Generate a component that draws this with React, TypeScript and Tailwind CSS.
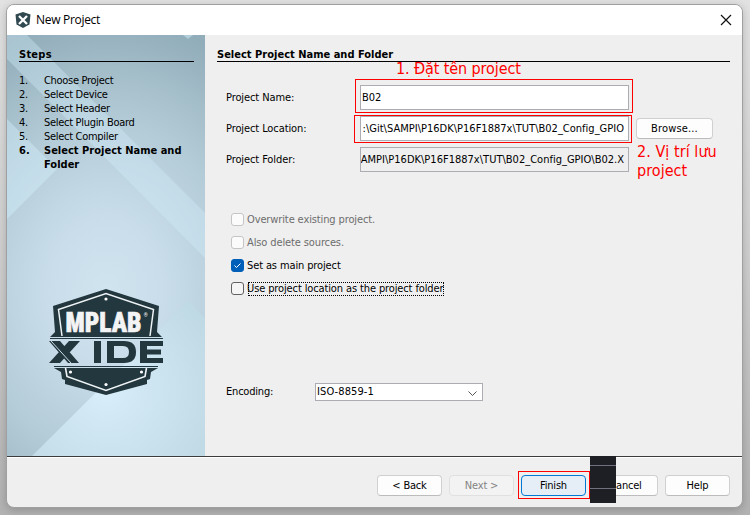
import React from 'react';

const steps = ['Choose Project', 'Select Device', 'Select Header', 'Select Plugin Board', 'Select Compiler', 'Select Project Name and Folder'];

function Backdrop() {
  return (
    <svg className="absolute inset-0" width="198" height="421" viewBox="7 35 198 421">
      <defs>
        <radialGradient id="glow" gradientUnits="userSpaceOnUse" cx="106" cy="290" r="275" gradientTransform="translate(106 290) scale(.8 1) translate(-106 -290)">
          <stop offset="0" stopColor="#d0e4f0" />
          <stop offset=".25" stopColor="#c9deea" />
          <stop offset=".6" stopColor="#b4ccd8" />
          <stop offset="1" stopColor="#91adb9" />
        </radialGradient>
        <radialGradient id="low" gradientUnits="userSpaceOnUse" cx="106" cy="390" r="150">
          <stop offset="0" stopColor="#d8eefa" />
          <stop offset="1" stopColor="#b8d3df" />
        </radialGradient>
      </defs>
      <rect x="7" y="35" width="198" height="421" fill="url(#glow)" />
      <path d="M27 35L205 213V258L7 59V35Z" fill="#d2edfa" opacity=".38" />
      <path d="M7 119L57 169L7 219Z" fill="#d2edfa" opacity=".45" />
      <path d="M183 35H193L188 39Z" fill="#d2edfa" opacity=".5" />
      <path d="M188 301L205 318V456H32Z" fill="url(#low)" />
    </svg>
  );
}

function Logo() {
  return (
    <svg className="absolute left-[42px] top-[253px]" width="116" height="108" viewBox="49 288 116 108">
      <path d="M106 289L159 306L157 332L162 337H50L55 332L53 306Z" fill="#23373f" />
      <path d="M62 336L58.500 309.500L106 293.500L153.500 309.500L150 336" fill="none" stroke="#eef3f5" strokeWidth="1.500" />
      <path d="M50 338.500H163" stroke="#23373f" strokeWidth="1" />
      <circle cx="106" cy="299" r="1.600" fill="#fff" />
      <text x="65.500" y="332" textLength="76" lengthAdjust="spacingAndGlyphs" fontFamily="Roboto, sans-serif" fontWeight="900" fontSize="27" fill="#f4f4f4" stroke="#f4f4f4" strokeWidth=".6" letterSpacing="0">MPLAB</text>
      <text x="143.800" y="317" fontFamily="Roboto, sans-serif" fontSize="5" fill="#fff" letterSpacing="0">®</text>
      <path d="M49 341H60L79 363H68ZM69 341H80L60 363H49Z" fill="#23373f" />
      <path d="M51 341L71 363" stroke="#c9dfe9" strokeWidth="1" />
      <path d="M94 341H101V363H94ZM107 341H124Q136 341 136 352Q136 363 124 363H107ZM114 346V358H123Q129 358 129 352Q129 346 123 346ZM140 341H163V346H147V349.500H161V354.500H147V358H163V363H140Z" fill="#23373f" fillRule="evenodd" />
      <path d="M54 366.500H158" stroke="#23373f" />
      <path d="M54 368H158L151 372L150 379L147 380V384L106 395L65 384V380L62 379L61 372Z" fill="#23373f" />
      <path d="M65.500 368L67 376.500L106 390.500L145 376.500L146.500 368" fill="none" stroke="#eef3f5" strokeWidth="1.600" />
      <circle cx="70.500" cy="372" r="1.600" fill="#fff" />
      <circle cx="141.500" cy="372" r="1.600" fill="#fff" />
      <circle cx="106" cy="384.500" r="1.600" fill="#fff" />
    </svg>
  );
}

function Field({ label, value, align = '', bg = 'bg-white' }: { label: string; value: string; align?: string; bg?: string }) {
  return (
    <div className="flex h-[25px] items-center">
      <label className="w-[134px] tracking-[-0.1px]">{label}</label>
      <div className={`flex h-[25px] w-[269px] items-center overflow-hidden border border-[#abadb3] pl-px pr-[4px] tracking-[0.01px] ${bg} ${align}`}>{value}</div>
    </div>
  );
}

function Check({ label, checked = false, disabled = false, focus = false }: { label: string; checked?: boolean; disabled?: boolean; focus?: boolean }) {
  return (
    <div className="flex h-[15px] items-center gap-[3px]">
      <span className={`flex size-[13px] items-center justify-center rounded-[3px] border ${checked ? 'border-[#005fb8] bg-[#005fb8]' : disabled ? 'border-[#c5c5c5] bg-[#fbfbfb]' : 'border-[#626262] bg-[#f5f5f5]'}`}>
        {checked && <svg width="9" height="9" viewBox="0 0 9 9"><path d="M1.500 4.500L3.500 6.500L7.500 2.500" fill="none" stroke="#fff" /></svg>}
      </span>
      <span className={`relative whitespace-nowrap tracking-[-0.12px] ${disabled ? 'text-[#6d6d6d]' : ''}`}>
        {label}
        {focus && <span className="absolute left-px top-0 h-[14px] w-[196px] border border-dotted border-black" />}
      </span>
    </div>
  );
}

function Btn({ children, kind = 'border-[#d0d0d0] border-b-[#bcbcbc] bg-[#fdfdfd]', w = 'w-[65px]' }: { children: React.ReactNode; kind?: string; w?: string }) {
  return <button className={`flex h-[21px] shrink-0 items-center justify-center rounded-[4px] border ${w} ${kind}`}>{children}</button>;
}

export default function App() {
  return (
    <div className="relative h-[515px] w-[750px] overflow-hidden bg-gradient-to-b from-[#e2e2e2] via-[#cfcfcf] to-[#b2b2b2] px-[6px] pt-[4px] font-['DejaVu_Sans_Condensed','DejaVu_Sans',sans-serif] text-[11px] leading-[14px] tracking-[-0.2px] text-black [font-stretch:condensed]">
      <div className="flex h-[504px] w-[737px] flex-col overflow-hidden rounded-[8px] border border-[#a0a0a0] bg-[#efefef] shadow-[0_2px_8px_rgba(0,0,0,0.2)]">
        <header className="flex h-[30px] shrink-0 items-center justify-between bg-white pl-[8px] pr-[10px]">
          <div className="flex items-center gap-[5px]">
            <svg width="16" height="16" viewBox="0 0 16 16">
              <path d="M8 0L15.500 2.500L14.500 12.500L8 16L1.500 12.500L.5 2.500Z" fill="#304850" />
              <path d="M4 4L12 12M12 4L4 12" stroke="#fff" strokeWidth="2.300" />
            </svg>
            <span className="font-['Open_Sans',sans-serif] text-[12px] tracking-[-0.3px] [font-stretch:normal]">New Project</span>
          </div>
          <svg width="12" height="12" viewBox="0 0 12 12"><path d="M1 1L11 11M11 1L1 11" stroke="#111" strokeWidth="1.200" /></svg>
        </header>
        <main className="flex h-[421px] shrink-0">
          <aside className="relative w-[198px] shrink-0 px-[12px] pt-[12px]">
            <Backdrop />
            <Logo />
            <div className="relative">
              <h2 className="h-[15px] w-[175px] border-b border-black pt-px font-bold tracking-[0.25px]">Steps</h2>
              <ol className="mt-[12px]">
                {steps.map((s, i) => (
                  <li key={s} className={`flex ${i === 5 ? 'font-bold tracking-[0.01px]' : 'tracking-[-0.3px]'}`}>
                    <span className="w-[25px] shrink-0">{i + 1}.</span><span className="w-[145px]">{s}</span>
                  </li>
                ))}
              </ol>
            </div>
          </aside>
          <section className="relative flex-1 pl-[12px] pt-[12px]">
            <h2 className="h-[15px] w-[513px] border-b border-black pt-px font-bold tracking-[0.01px]">Select Project Name and Folder</h2>
            <div className="ml-[9px] mt-[23px] flex flex-col gap-[6px]">
              <Field label="Project Name:" value="B02" />
              <div className="flex items-center gap-[7px]">
                <Field label="Project Location:" value=":\Git\SAMPI\P16DK\P16F1887x\TUT\B02_Config_GPIO" align="justify-end" />
                <Btn w="w-[77px] tracking-[0.15px]">Browse...</Btn>
              </div>
              <Field label="Project Folder:" value="AMPI\P16DK\P16F1887x\TUT\B02_Config_GPIO\B02.X" align="justify-end" bg="bg-[#efefef]" />
            </div>
            <div className="ml-[14px] mt-[40px] flex flex-col gap-[8px]">
              <Check label="Overwrite existing project." disabled />
              <Check label="Also delete sources." disabled />
              <Check label="Set as main project" checked />
              <Check label="Use project location as the project folder" focus />
            </div>
            <div className="ml-[9px] mt-[87px] flex h-[18px] items-center">
              <span className="w-[89px]">Encoding:</span>
              <div className="flex h-[18px] w-[168px] items-center justify-between border border-[#abadb3] bg-white pl-px pr-[5px] tracking-[0.1px]">
                ISO-8859-1
                <svg className="mt-[4px]" width="9" height="6" viewBox="0 0 9 6"><path d="M.5 .5L4.500 4.500L8.500 .5" fill="none" stroke="#555" /></svg>
              </div>
            </div>
            <div className="absolute left-[150px] top-[44px] h-[34px] w-[278px] border border-[#f00]" />
            <div className="absolute left-[149px] top-[80px] h-[28px] w-[278px] border border-[#f00]" />
            <p className="absolute left-[191px] top-[24px] whitespace-nowrap text-[16px] leading-[20px] tracking-[-0.1px] text-[#f00]">1. Đặt tên project</p>
            <p className="absolute left-[432px] top-[107px] whitespace-nowrap text-[16px] leading-[19px] tracking-[0.05px] text-[#f00]">2. Vị trí lưu<br />project</p>
          </section>
        </main>
        <footer className="relative flex flex-1 gap-[7px] border-t border-[#3c3c3c] pl-[370px] pt-[18px] shadow-[inset_0_1px_0_#fff]">
          <Btn>&lt; Back</Btn>
          <Btn kind="border-[#e0e0e0] bg-[#f3f3f3] text-[#838383]">Next &gt;</Btn>
          <Btn kind="border-[#0078d4] bg-[#e5eef7]">Finish</Btn>
          <Btn>Cancel</Btn>
          <Btn>Help</Btn>
          <div className="absolute left-[511px] top-[14px] h-[28px] w-[72px] border border-[#f00]" />
          <div className="absolute left-[583px] top-[-1px] h-[47px] w-[26px] bg-[#1e1f24]">
            <div className="mt-[9px] h-px bg-[#70717f]" />
            <div className="mt-[22px] h-px bg-[#70717f]" />
          </div>
        </footer>
      </div>
    </div>
  );
}
